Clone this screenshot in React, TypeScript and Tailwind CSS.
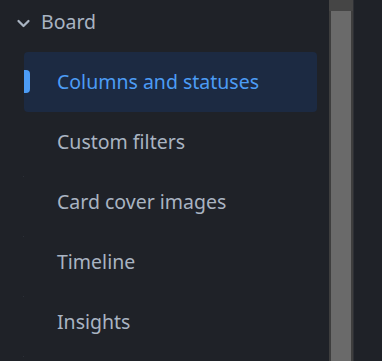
import React from "react";

const items = ["Columns and statuses", "Custom filters", "Card cover images", "Timeline", "Insights"];

export default function App() {
  return (
    <div
      className="w-[382px] h-[361px] overflow-hidden flex bg-[#1f2228]"
      style={{ fontFamily: '"Noto Sans", "Open Sans", sans-serif' }}
    >
      {/* Sidebar list */}
      <div className="w-[329px] shrink-0 flex flex-col">
        <div className="h-[44px] flex items-center pl-[16px] text-[#a9b4c2]">
          <svg width="15" height="15" viewBox="0 0 24 24" fill="none" stroke="currentColor" strokeWidth="3.6" strokeLinecap="round" strokeLinejoin="round" className="mr-[10px] mt-[2px]">
            <path d="M4 8l8 8 8-8" />
          </svg>
          <span className="text-[19.5px] leading-none">Board</span>
        </div>
        <div className="flex flex-col pl-[24px] pr-[12px] pt-[8px]">
          {items.map((label, i) => {
            const active = i === 0;
            return (
              <div
                key={label}
                className={`relative h-[60px] flex items-center pl-[33px] rounded-[4px] text-[19.5px] ${
                  active ? "bg-[#1c2a42] text-[#4c9cf5]" : "text-[#a9b4c2]"
                }`}
              >
                {active && (
                  <span className="absolute left-0 top-[18px] w-[6px] h-[23px] rounded-r-[4px] bg-[#4c9cf5]" />
                )}
                {!active && (
                  <span className="absolute left-[-1px] bottom-[-5px] w-px h-px bg-[#2c3038]" />
                )}
                {label}
              </div>
            );
          })}
        </div>
      </div>

      {/* Scrollbar */}
      <div className="w-[25px] shrink-0 flex bg-[#3e3e3e] border-r border-[#2e3035]">
        <div className="flex-1 flex flex-col">
          <div className="h-[11px] bg-[#454545]" />
          <div className="flex-1 mx-[2px] bg-[#6a6a6a]" />
        </div>
      </div>

      <div className="flex-1" />
    </div>
  );
}
